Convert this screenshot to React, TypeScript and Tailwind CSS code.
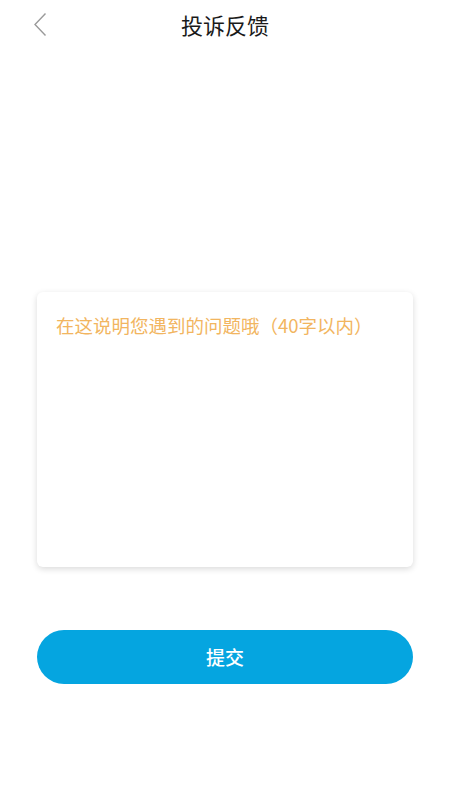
import React from "react";

export default function App() {
  return (
    <div
      className="flex min-h-[800px] w-full flex-col bg-white"
      style={{ fontFamily: '"Noto Sans CJK SC", "Noto Sans", sans-serif' }}
    >
      {/* Header */}
      <div className="relative flex h-[48px] items-center justify-center">
        <button className="absolute left-[32px] top-[11px] flex h-[26px] w-[16px] items-center justify-center">
          <svg width="14" height="25" viewBox="0 0 14 25" fill="none">
            <path d="M12.5 1.5 L2 12.5 L12.5 23.5" stroke="#9a9a9a" strokeWidth="1.4" />
          </svg>
        </button>
        <h1 className="text-[22px] font-normal leading-none text-[#1a1a1a]">投诉反馈</h1>
      </div>

      {/* Feedback card */}
      <div className="mx-[37px] mt-[244px] h-[275px] rounded-[6px] bg-white shadow-[0_2px_6px_rgba(0,0,0,0.15)]">
        <textarea
          maxLength={40}
          placeholder="在这说明您遇到的问题哦（40字以内）"
          className="h-full w-full resize-none bg-transparent px-[19px] pt-[20px] text-[18.5px] leading-[26px] text-[#333] outline-none placeholder:text-[#f2b560]"
        />
      </div>

      {/* Submit */}
      <div className="mx-[37px] mt-[63px]">
        <button className="flex h-[54px] w-full items-center justify-center rounded-full bg-[#05a5e0] text-[19px] font-medium text-white">
          提交
        </button>
      </div>
    </div>
  );
}
